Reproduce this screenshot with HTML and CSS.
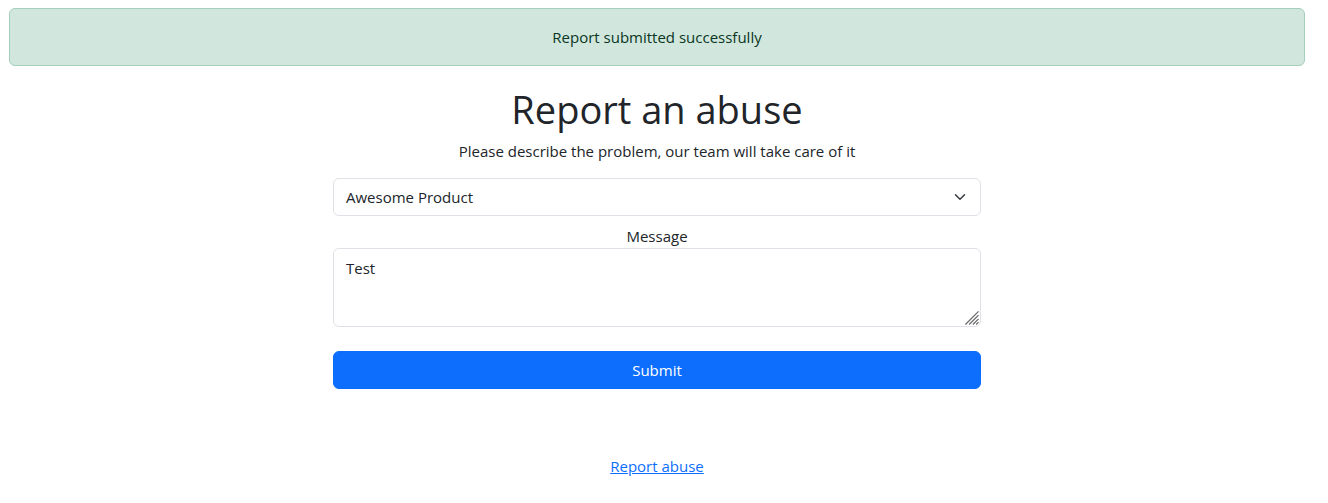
FILE: index.html
```html
<!DOCTYPE html>
<html lang="en">
<head>
<meta charset="utf-8">
<title>Report an abuse</title>
<link rel="stylesheet" href="styles.css">
</head>
<body>
<div class="page">
  <div class="alert">Report submitted successfully</div>
  <main class="report">
    <h1 class="title">Report an abuse</h1>
    <p class="lead">Please describe the problem, our team will take care of it</p>
    <form class="form">
      <div class="select">
        <span>Awesome Product</span>
        <svg class="chev" width="16" height="16" viewBox="0 0 16 16"><path d="M2 5l6 6 6-6" fill="none" stroke="#343a40" stroke-width="2" stroke-linecap="round" stroke-linejoin="round"/></svg>
      </div>
      <label class="label" for="msg">Message</label>
      <div class="area-wrap">
        <textarea id="msg" class="textarea">Test</textarea>
        <svg class="grip" width="16" height="16" viewBox="0 0 16 16"><path d="M15.5 1.5L1.5 15.5M15.5 5.5L5.5 15.5M15.5 9.5L9.5 15.5M15.5 13L13 15.5" stroke="#6a6a6a" stroke-width="1.3" fill="none"/></svg>
      </div>
      <button type="button" class="btn">Submit</button>
    </form>
  </main>
  <footer class="foot"><a href="#" class="link">Report abuse</a></footer>
</div>
</body>
</html>
```
FILE: styles.css
```css
* { box-sizing: border-box; }
html, body { margin: 0; padding: 0; background: #fff; }
body {
  font-family: "Open Sans", "Noto Sans", "Liberation Sans", sans-serif;
  font-size: 16px;
  line-height: 1.5;
  color: #212529;
}
.page {
  padding: 8px 23px 8px 9px;
  display: flex;
  flex-direction: column;
}
.alert {
  background: #d1e7dd;
  border: 1px solid #a3cfbb;
  color: #0a3622;
  border-radius: 6px;
  padding: 16px;
  text-align: center;
  font-size: 15px;
  line-height: 24px;
}
.report {
  display: flex;
  flex-direction: column;
  align-items: center;
  margin-top: 16px;
}
.title {
  margin: 0 0 6px;
  padding-top: 3px;
  font-size: 38px;
  font-weight: 400;
  line-height: 48px;
}
.lead {
  margin: 0 0 15px;
  font-size: 15px;
  line-height: 24px;
}
.form {
  width: 648px;
  display: flex;
  flex-direction: column;
  align-items: stretch;
}
.select {
  height: 38px;
  border: 1px solid #dee2e6;
  border-radius: 6px;
  display: flex;
  align-items: center;
  justify-content: space-between;
  padding: 0 14px 0 12px;
  font-size: 15px;
}
.chev { width: 12px; height: 12px; }
.label {
  text-align: center;
  margin-top: 8px;
  font-size: 15px;
  line-height: 24px;
}
.area-wrap {
  position: relative;
  display: flex;
}
.textarea {
  flex: 1;
  height: 79px;
  border: 1px solid #dee2e6;
  border-radius: 6px;
  padding: 8px 12px;
  font: inherit;
  font-size: 15px;
  color: #212529;
  resize: none;
}
.grip {
  position: absolute;
  right: 2px;
  bottom: 2px;
  width: 15px;
  height: 15px;
}
.btn {
  margin-top: 24px;
  height: 38px;
  background: #0d6efd;
  color: #fff;
  border: 1px solid #0d6efd;
  border-radius: 6px;
  font: inherit;
  font-size: 15px;
}
.foot {
  margin-top: 66px;
  text-align: center;
  font-size: 15px;
}
.link { color: #0d6efd; text-decoration: underline; }
```
